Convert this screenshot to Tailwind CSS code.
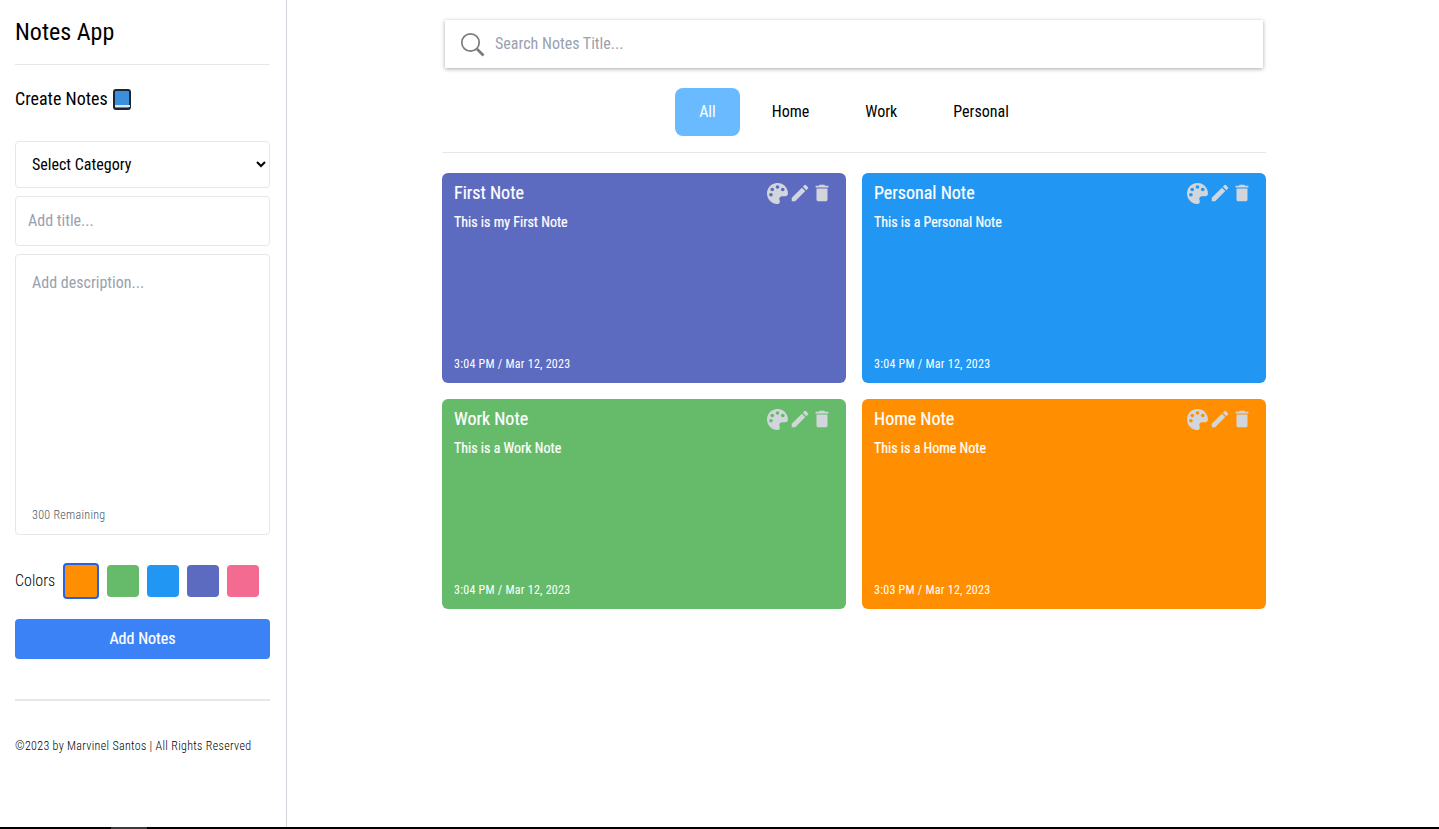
<!DOCTYPE html>
<html lang="en">
<head>
  <meta charset="UTF-8">
  <meta name="viewport" content="width=device-width, initial-scale=1.0">
  <title>Notes App</title>
  <script src="https://cdn.jsdelivr.net/npm/@tailwindcss/browser@4"></script>
</head>
<body class="bg-white h-[829px] overflow-hidden font-['Roboto',sans-serif] [font-stretch:75%] text-black">
  <div class="flex h-[827px]">
    <!-- Sidebar -->
    <aside class="w-[287px] shrink-0 border-r border-gray-300 pl-[15px] pr-4">
      <h1 class="text-2xl leading-8 pt-4 pb-4 border-b border-gray-200">Notes App</h1>
      <h2 class="flex items-center gap-[5px] text-lg leading-7 mt-5 mb-[28px]">
        Create Notes
        <svg class="w-[18px] h-[21px]" viewBox="0 0 18 21">
          <rect x="1" y="1" width="16" height="19" rx="2" fill="#3b8fdc" stroke="#1c2733" stroke-width="2"/>
          <rect x="2" y="16" width="15" height="2" fill="#dfe7ef"/>
        </svg>
      </h2>
      <form class="flex flex-col gap-2">
        <select class="w-full h-[47px] pl-3 pr-1 border border-gray-200 rounded bg-white text-base">
          <option>Select Category</option>
        </select>
        <input type="text" placeholder="Add title..." class="w-full h-[50px] px-3 pb-[2px] border border-gray-200 rounded text-base placeholder:text-gray-400">
        <div class="h-[281px] border border-gray-200 rounded px-4 pt-4 pb-[11px] flex flex-col">
          <textarea placeholder="Add description..." class="flex-1 resize-none outline-none text-base placeholder:text-gray-400"></textarea>
          <span class="text-xs font-light tracking-[0.3px] text-gray-600">300 Remaining</span>
        </div>
      </form>
      <div class="flex items-center mt-7 h-9">
        <span class="font-light text-base mr-2">Colors</span>
        <div class="w-9 h-9 rounded bg-[#ff8f00] border-2 border-[#2563eb] mr-2"></div>
        <div class="w-8 h-8 rounded bg-[#66bb6a] mr-2"></div>
        <div class="w-8 h-8 rounded bg-[#2196f3] mr-2"></div>
        <div class="w-8 h-8 rounded bg-[#5c6bc0] mr-2"></div>
        <div class="w-8 h-8 rounded bg-[#f46b92]"></div>
      </div>
      <button class="w-full h-10 mt-5 rounded bg-[#3b82f6] text-white [-webkit-text-stroke:0.2px] text-base">Add Notes</button>
      <hr class="mt-10 border-t-2 border-gray-200">
      <p class="mt-[37px] text-xs leading-4 font-light tracking-[0.32px]">©2023 by Marvinel Santos | All Rights Reserved</p>
    </aside>

    <!-- Main -->
    <main class="flex-1 pr-[18px]">
      <div class="w-[824px] mx-auto pt-5">
        <div class="mx-[3px] h-12 flex items-center gap-2.5 px-[15px] bg-white shadow-[0_1px_4px_rgba(0,0,0,0.35)]">
          <svg class="w-[25px] h-[25px] text-[#7a7a7a]" viewBox="0 0 25 25" fill="none" stroke="currentColor">
            <circle cx="10.5" cy="10.5" r="8.7" stroke-width="1.7"/>
            <path d="M17 17l6.5 6.5" stroke-width="2.6"/>
          </svg>
          <input type="text" placeholder="Search Notes Title..." class="flex-1 outline-none text-base placeholder:text-gray-400">
        </div>
        <nav class="flex justify-center gap-2 mt-5 pb-4 border-b border-gray-200 text-base">
          <button class="h-12 px-6 rounded-lg bg-[#6abaff] text-white">All</button>
          <button class="h-12 px-6">Home</button>
          <button class="h-12 px-6">Work</button>
          <button class="h-12 px-6">Personal</button>
        </nav>
        <div class="grid grid-cols-2 gap-4 mt-5">
          <article class="h-[210px] rounded-md bg-[#5c6bc0] text-white px-3 flex flex-col">
            <div class="flex justify-between items-center h-10">
              <h3 class="text-lg [-webkit-text-stroke:0.2px]">First Note</h3>
              <div class="flex items-center pr-[1px] text-gray-300">
                <svg class="w-[21px] h-[21px] mr-[1px]" viewBox="0 0 512 512" fill="currentColor"><path d="M204.3 5C104.9 24.4 24.8 104.3 5.2 203.4c-37 187 131.7 326.4 258.8 306.7 41.2-6.4 61.4-54.6 42.5-91.7-23.1-45.4 9.9-98.4 60.9-98.4h79.7c35.8 0 64.8-29.6 64.9-65.3C511.5 97.1 368.1-26.9 204.3 5z"/><g fill="#5c6bc0"><circle cx="96" cy="288" r="44"/><circle cx="128" cy="160" r="44"/><circle cx="256" cy="96" r="44"/><circle cx="384" cy="160" r="44"/></g></svg>
                <svg class="w-[22px] h-[22px]" viewBox="0 0 24 24" fill="currentColor"><path d="M3 17.25V21h3.75L17.81 9.94l-3.75-3.75L3 17.25zM20.71 7.04a1 1 0 0 0 0-1.41l-2.34-2.34a1 1 0 0 0-1.41 0l-1.83 1.83 3.75 3.75 1.83-1.83z"/></svg>
                <svg class="w-[22px] h-[22px]" viewBox="0 0 24 24" fill="currentColor"><path d="M6 19c0 1.1.9 2 2 2h8c1.1 0 2-.9 2-2V7H6v12zM19 4h-3.5l-1-1h-5l-1 1H5v2h14V4z"/></svg>
              </div>
            </div>
            <p class="text-sm [-webkit-text-stroke:0.2px] leading-[18px]">This is my First Note</p>
            <span class="mt-auto mb-[11px] text-xs leading-4 tracking-[0.25px]">3:04 PM / Mar 12, 2023</span>
          </article>
          <article class="h-[210px] rounded-md bg-[#2196f3] text-white px-3 flex flex-col">
            <div class="flex justify-between items-center h-10">
              <h3 class="text-lg [-webkit-text-stroke:0.2px]">Personal Note</h3>
              <div class="flex items-center pr-[1px] text-gray-300">
                <svg class="w-[21px] h-[21px] mr-[1px]" viewBox="0 0 512 512" fill="currentColor"><path d="M204.3 5C104.9 24.4 24.8 104.3 5.2 203.4c-37 187 131.7 326.4 258.8 306.7 41.2-6.4 61.4-54.6 42.5-91.7-23.1-45.4 9.9-98.4 60.9-98.4h79.7c35.8 0 64.8-29.6 64.9-65.3C511.5 97.1 368.1-26.9 204.3 5z"/><g fill="#2196f3"><circle cx="96" cy="288" r="44"/><circle cx="128" cy="160" r="44"/><circle cx="256" cy="96" r="44"/><circle cx="384" cy="160" r="44"/></g></svg>
                <svg class="w-[22px] h-[22px]" viewBox="0 0 24 24" fill="currentColor"><path d="M3 17.25V21h3.75L17.81 9.94l-3.75-3.75L3 17.25zM20.71 7.04a1 1 0 0 0 0-1.41l-2.34-2.34a1 1 0 0 0-1.41 0l-1.83 1.83 3.75 3.75 1.83-1.83z"/></svg>
                <svg class="w-[22px] h-[22px]" viewBox="0 0 24 24" fill="currentColor"><path d="M6 19c0 1.1.9 2 2 2h8c1.1 0 2-.9 2-2V7H6v12zM19 4h-3.5l-1-1h-5l-1 1H5v2h14V4z"/></svg>
              </div>
            </div>
            <p class="text-sm [-webkit-text-stroke:0.2px] leading-[18px]">This is a Personal Note</p>
            <span class="mt-auto mb-[11px] text-xs leading-4 tracking-[0.25px]">3:04 PM / Mar 12, 2023</span>
          </article>
          <article class="h-[210px] rounded-md bg-[#66bb6a] text-white px-3 flex flex-col">
            <div class="flex justify-between items-center h-10">
              <h3 class="text-lg [-webkit-text-stroke:0.2px]">Work Note</h3>
              <div class="flex items-center pr-[1px] text-gray-300">
                <svg class="w-[21px] h-[21px] mr-[1px]" viewBox="0 0 512 512" fill="currentColor"><path d="M204.3 5C104.9 24.4 24.8 104.3 5.2 203.4c-37 187 131.7 326.4 258.8 306.7 41.2-6.4 61.4-54.6 42.5-91.7-23.1-45.4 9.9-98.4 60.9-98.4h79.7c35.8 0 64.8-29.6 64.9-65.3C511.5 97.1 368.1-26.9 204.3 5z"/><g fill="#66bb6a"><circle cx="96" cy="288" r="44"/><circle cx="128" cy="160" r="44"/><circle cx="256" cy="96" r="44"/><circle cx="384" cy="160" r="44"/></g></svg>
                <svg class="w-[22px] h-[22px]" viewBox="0 0 24 24" fill="currentColor"><path d="M3 17.25V21h3.75L17.81 9.94l-3.75-3.75L3 17.25zM20.71 7.04a1 1 0 0 0 0-1.41l-2.34-2.34a1 1 0 0 0-1.41 0l-1.83 1.83 3.75 3.75 1.83-1.83z"/></svg>
                <svg class="w-[22px] h-[22px]" viewBox="0 0 24 24" fill="currentColor"><path d="M6 19c0 1.1.9 2 2 2h8c1.1 0 2-.9 2-2V7H6v12zM19 4h-3.5l-1-1h-5l-1 1H5v2h14V4z"/></svg>
              </div>
            </div>
            <p class="text-sm [-webkit-text-stroke:0.2px] leading-[18px]">This is a Work Note</p>
            <span class="mt-auto mb-[11px] text-xs leading-4 tracking-[0.25px]">3:04 PM / Mar 12, 2023</span>
          </article>
          <article class="h-[210px] rounded-md bg-[#ff8f00] text-white px-3 flex flex-col">
            <div class="flex justify-between items-center h-10">
              <h3 class="text-lg [-webkit-text-stroke:0.2px]">Home Note</h3>
              <div class="flex items-center pr-[1px] text-gray-300">
                <svg class="w-[21px] h-[21px] mr-[1px]" viewBox="0 0 512 512" fill="currentColor"><path d="M204.3 5C104.9 24.4 24.8 104.3 5.2 203.4c-37 187 131.7 326.4 258.8 306.7 41.2-6.4 61.4-54.6 42.5-91.7-23.1-45.4 9.9-98.4 60.9-98.4h79.7c35.8 0 64.8-29.6 64.9-65.3C511.5 97.1 368.1-26.9 204.3 5z"/><g fill="#ff8f00"><circle cx="96" cy="288" r="44"/><circle cx="128" cy="160" r="44"/><circle cx="256" cy="96" r="44"/><circle cx="384" cy="160" r="44"/></g></svg>
                <svg class="w-[22px] h-[22px]" viewBox="0 0 24 24" fill="currentColor"><path d="M3 17.25V21h3.75L17.81 9.94l-3.75-3.75L3 17.25zM20.71 7.04a1 1 0 0 0 0-1.41l-2.34-2.34a1 1 0 0 0-1.41 0l-1.83 1.83 3.75 3.75 1.83-1.83z"/></svg>
                <svg class="w-[22px] h-[22px]" viewBox="0 0 24 24" fill="currentColor"><path d="M6 19c0 1.1.9 2 2 2h8c1.1 0 2-.9 2-2V7H6v12zM19 4h-3.5l-1-1h-5l-1 1H5v2h14V4z"/></svg>
              </div>
            </div>
            <p class="text-sm [-webkit-text-stroke:0.2px] leading-[18px]">This is a Home Note</p>
            <span class="mt-auto mb-[11px] text-xs leading-4 tracking-[0.25px]">3:03 PM / Mar 12, 2023</span>
          </article>
        </div>
      </div>
    </main>
  </div>
  <div class="h-[2px] bg-black pl-[111px]"><div class="w-9 h-full bg-[#3a3a3a]"></div></div>
</body>
</html>
